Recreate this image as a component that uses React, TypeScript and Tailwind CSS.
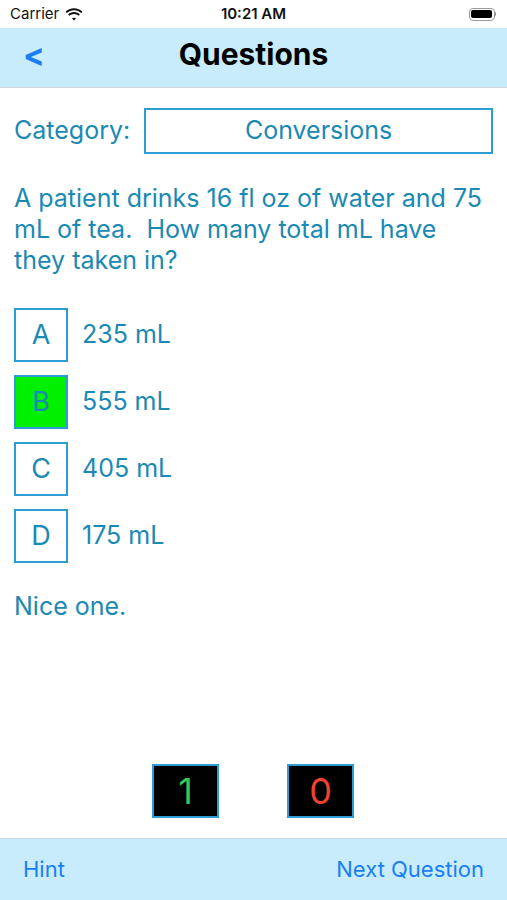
const options = [
  { letter: "A", text: "235 mL", correct: false },
  { letter: "B", text: "555 mL", correct: true },
  { letter: "C", text: "405 mL", correct: false },
  { letter: "D", text: "175 mL", correct: false },
];

function Wifi() {
  return (
    <svg width="18" height="13" viewBox="0 0 18 13" fill="#111">
      <path d="M9 2.2c2.8 0 5.3 1.1 7.2 2.9l1.3-1.4C15.3 1.6 12.3.3 9 .3S2.7 1.6.5 3.7l1.3 1.4C3.7 3.3 6.2 2.2 9 2.2z" />
      <path d="M9 6c1.8 0 3.4.7 4.6 1.8l1.3-1.4C13.4 5 11.3 4.1 9 4.1S4.6 5 3.1 6.4l1.3 1.4C5.6 6.7 7.2 6 9 6z" />
      <path d="M9 9.7c.8 0 1.5.3 2 .8L9 12.6l-2-2.1c.5-.5 1.2-.8 2-.8z" />
    </svg>
  );
}

export default function App() {
  return (
    <div className="flex h-[900px] w-[507px] flex-col bg-white font-['Inter','Liberation_Sans',sans-serif] text-[#1a89b3]">
      {/* status bar */}
      <div className="flex h-[28px] items-center justify-between px-[10px] text-[15px] text-[#111]">
        <div className="flex w-[120px] items-center gap-[6px]">
          <span>Carrier</span>
          <Wifi />
        </div>
        <span className="font-semibold">10:21 AM</span>
        <div className="flex w-[120px] justify-end pr-[1px]">
          <div className="flex items-center">
            <div className="h-[13px] w-[26px] rounded-[4px] border border-[#999] p-[1.5px]">
              <div className="h-full w-full rounded-[2px] bg-black" />
            </div>
            <div className="h-[4px] w-[1.5px] rounded-r bg-[#999]" />
          </div>
        </div>
      </div>

      {/* nav bar */}
      <div className="relative flex h-[60px] items-center justify-center border-b border-[#cfd8dc] bg-[#c8ecfb] pb-[7px]">
        <span className="absolute left-[23px] top-[3px] text-[32px] font-bold text-[#1a7ef5]">&lt;</span>
        <span className="text-[30px] font-bold text-black">Questions</span>
      </div>

      {/* content */}
      <div className="flex flex-col px-[14px]">
        <div className="mt-[20px] flex items-center gap-[14px]">
          <span className="text-[25px]">Category:</span>
          <div className="flex h-[46px] flex-1 items-center justify-center border-2 border-[#2c9dd2] text-[25px]">
            Conversions
          </div>
        </div>

        <p className="mt-[29px] pr-[6px] text-[25px] leading-[31px]">
          A patient drinks 16 fl oz of water and 75 mL of tea.&nbsp; How many total mL have they taken in?
        </p>

        <div className="mt-[32px] flex flex-col gap-[13px]">
          {options.map((o) => (
            <div key={o.letter} className="flex items-center gap-[14px]">
              <div
                className={
                  o.correct
                    ? "flex h-[54px] w-[54px] items-center justify-center border-2 border-[#2c9dd2] bg-[#00f000] text-[27px]"
                    : "flex h-[54px] w-[54px] items-center justify-center border-2 border-[#2c9dd2] text-[27px]"
                }
              >
                {o.letter}
              </div>
              <span className="text-[25px]">{o.text}</span>
            </div>
          ))}
        </div>

        <p className="mt-[28px] text-[25px] leading-[31px]">Nice one.</p>
      </div>

      <div className="flex-1" />

      {/* score */}
      <div className="mb-[20px] flex justify-center gap-[68px] pr-[1px]">
        <div className="flex h-[54px] w-[67px] items-center justify-center border-2 border-[#2c9dd2] bg-black text-[36px] text-[#34c759]">
          1
        </div>
        <div className="flex h-[54px] w-[67px] items-center justify-center border-2 border-[#2c9dd2] bg-black text-[36px] text-[#f2412f]">
          0
        </div>
      </div>

      {/* toolbar */}
      <div className="flex h-[62px] items-center justify-between border-t border-[#cfd8dc] bg-[#c8ecfb] px-[23px] text-[22px] text-[#1a7ef5]">
        <span>Hint</span>
        <span>Next Question</span>
      </div>
    </div>
  );
}
